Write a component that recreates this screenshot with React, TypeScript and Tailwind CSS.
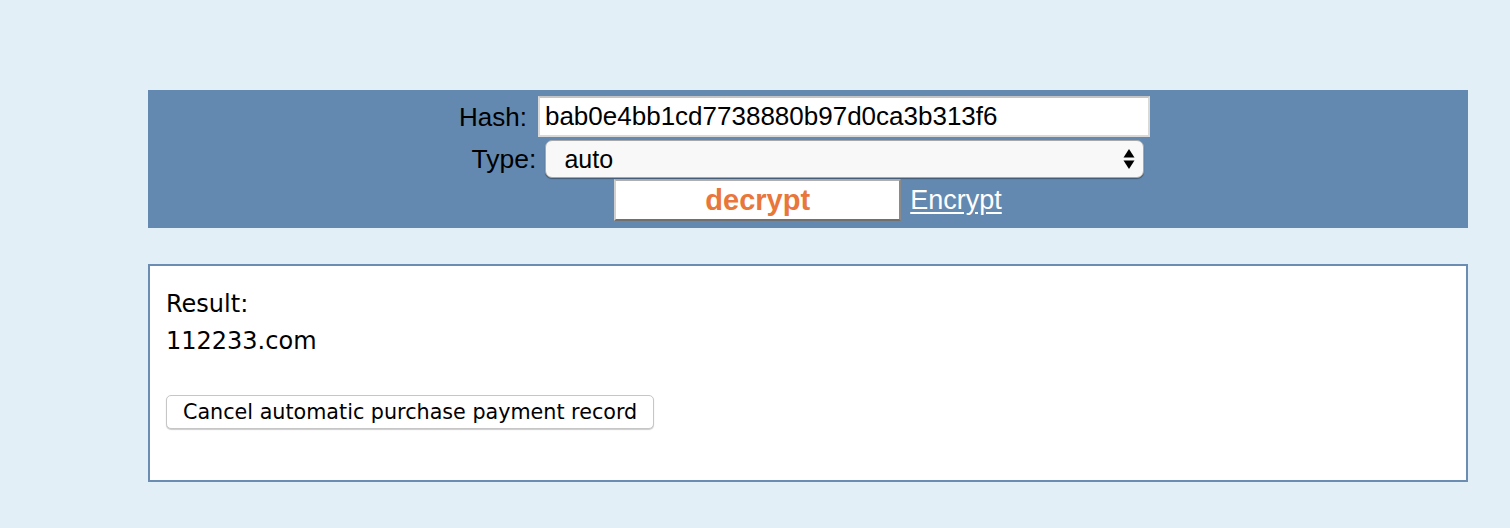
import React, { useState } from 'react';

const App: React.FC = () => {
  const [hash, setHash] = useState('bab0e4bb1cd7738880b97d0ca3b313f6');
  const [type, setType] = useState('auto');

  return (
    <div className="min-h-screen bg-[#e3eff7] pt-[90px] pb-[40px]">
      {/* search panel */}
      <div
        className="ml-[148px] w-[1320px] bg-[#6489b0] pt-[6px] pb-[7px] text-black"
        style={{ fontFamily: '"Liberation Sans", Arial, sans-serif' }}
      >
        <div className="flex items-center justify-center pr-[7px]">
          <span className="text-[26px] leading-none">Hash:</span>
          <input
            value={hash}
            onChange={e => setHash(e.target.value)}
            className="ml-[11px] h-[41px] w-[612px] border-2 border-[#d9d9d9] border-t-[#c4c4c4] bg-white px-[5px] text-[26px] text-black outline-none"
          />
        </div>
        <div className="mt-[3px] flex items-center justify-center">
          <span className="text-[26.5px] leading-none">Type:</span>
          <div className="relative ml-[9px] h-[38px] w-[599px]">
            <select
              value={type}
              onChange={e => setType(e.target.value)}
              className="h-full w-full appearance-none rounded-[7px] border border-[#a8a8a8] bg-[#f8f8f8] pl-[18px] text-[25px] text-black shadow-[0_1px_1px_rgba(0,0,0,0.35)] outline-none"
            >
              <option value="auto">auto</option>
              <option value="md5">md5</option>
              <option value="sha1">sha1</option>
            </select>
            <svg
              className="pointer-events-none absolute right-[9px] top-1/2 -translate-y-1/2"
              width="12"
              height="22"
              viewBox="0 0 12 22"
            >
              <path d="M6 1 L11.5 9.5 L0.5 9.5 Z" fill="#000" />
              <path d="M0.5 12.5 L11.5 12.5 L6 21 Z" fill="#000" />
            </svg>
          </div>
        </div>
        <div className="mt-[1px] flex items-center justify-center">
          <button className="h-[42px] w-[287px] border-2 border-[#d0d0d0] border-t-[#b0b0b0] border-b-[#707070] border-r-[#8a8a8a] bg-white text-[29px] font-bold leading-none text-[#e9763a]">
            decrypt
          </button>
          <a href="#" className="ml-[9px] text-[27px] leading-none text-white underline underline-offset-[3px]">
            Encrypt
          </a>
        </div>
      </div>

      {/* result */}
      <div
        className="ml-[148px] mt-[36px] h-[218px] w-[1320px] border-2 border-[#6b8db2] bg-white px-[16px] pt-[20px] text-black"
        style={{ fontFamily: '"DejaVu Sans", Verdana, sans-serif' }}
      >
        <div className="text-[24px] leading-[37px]">Result:</div>
        <div className="text-[24px] leading-[37px]">112233.com</div>
        <button className="mt-[35px] h-[34px] rounded-[5px] border border-[#c6c6c6] bg-white px-[16px] text-[20.7px] leading-none text-black shadow-[0_1px_1px_rgba(0,0,0,0.2)]">
          Cancel automatic purchase payment record
        </button>
      </div>
    </div>
  );
};

export default App;
